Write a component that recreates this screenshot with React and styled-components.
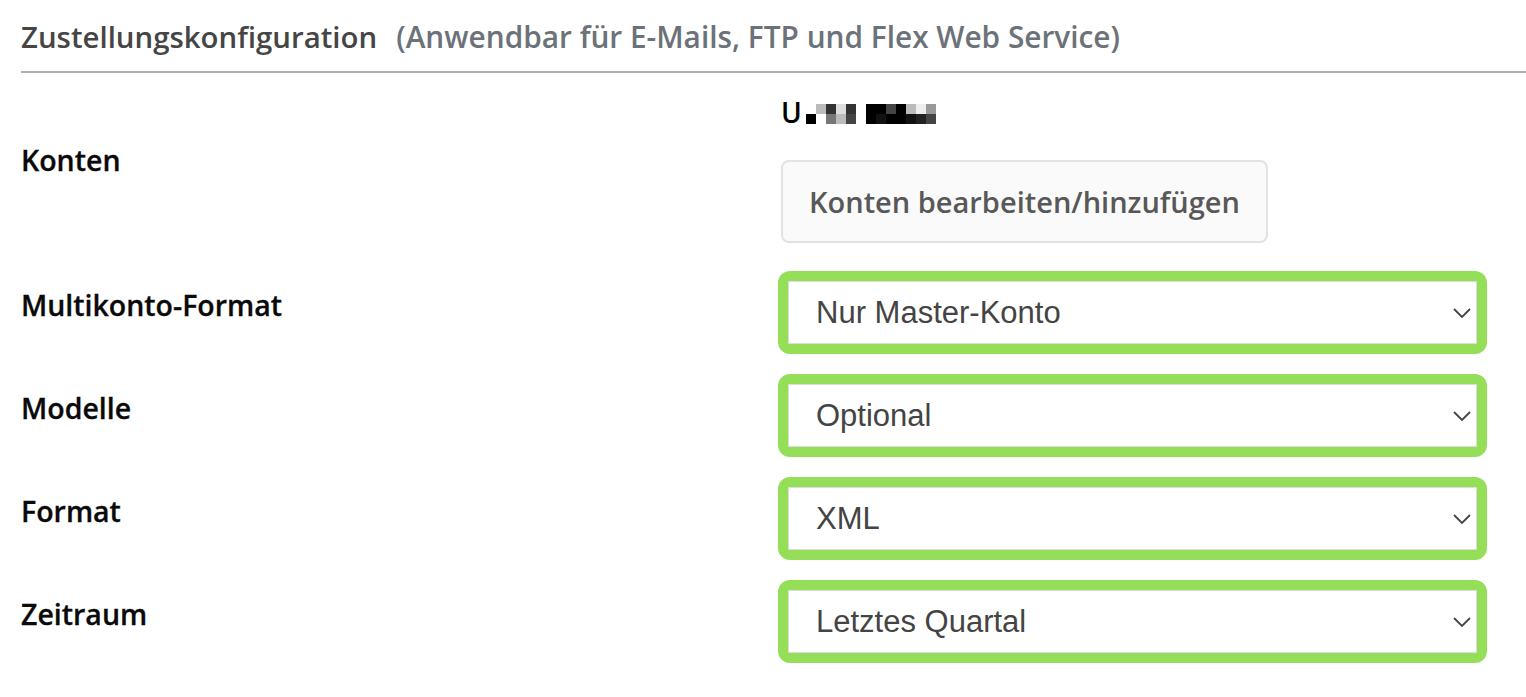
import React from "react";
import styled, { createGlobalStyle } from "styled-components";

const Global = createGlobalStyle`
  html, body { margin: 0; padding: 0; background: #fff; }
  body { font-family: "Open Sans", Lato, sans-serif; }
`;

const Page = styled.div`
  width: 1526px;
  height: 697px;
  overflow: hidden;
  padding: 18px 0 0 21px;
  box-sizing: border-box;
`;

const Header = styled.div`
  display: flex;
  align-items: baseline;
  gap: 19px;
  height: 37px;
  border-bottom: 2px solid #b1b1b1;
  padding-bottom: 16px;
  font-size: 29.4px;
  font-weight: 600;
  line-height: 37px;
  white-space: nowrap;
`;

const Title = styled.span`
  color: #454545;
`;

const Subtitle = styled.span`
  color: #6c7279;
  font-size: 29.8px;
`;

const Form = styled.div`
  display: grid;
  grid-template-columns: 757px 709px;
  margin-top: 24px;
`;

const Label = styled.div`
  font-size: 28.5px;
  line-height: 38px;
  font-weight: 600;
  color: #0a0a0a;
  -webkit-text-stroke: 0.3px #0a0a0a;
  align-self: ${(p) => (p.$top ? "start" : "center")};
  margin-top: ${(p) => p.$mt || 0}px;
  padding-bottom: ${(p) => (p.$top ? 0 : 16)}px;
`;

const AccountCell = styled.div`
  display: flex;
  flex-direction: column;
  align-items: flex-start;
  padding-left: 3px;
  padding-bottom: 18px;
`;

const AccountName = styled.div`
  display: flex;
  align-items: center;
  height: 30px;
  font-size: 28px;
  font-weight: 600;
  color: #000;
`;

const Mosaic = styled.div`
  display: grid;
  grid-template-columns: repeat(${(p) => p.$cols}, 10px);
  grid-template-rows: 10px 10px;
  margin-left: ${(p) => p.$ml}px;
  margin-top: 4px;
`;

const Cell = styled.span`
  background: ${(p) => p.$c};
`;

const EditButton = styled.button`
  margin-top: 33px;
  width: 487px;
  height: 83px;
  border: 2px solid #e2e2e2;
  border-radius: 8px;
  background: #fafafa;
  font-family: "Open Sans", Lato, sans-serif;
  font-size: 29px;
  font-weight: 600;
  color: #585858;
  padding: 0;
`;

const SelectCell = styled.div`
  padding: 10px 0;
`;

const Highlight = styled.div`
  height: 83px;
  box-sizing: border-box;
  border: 10px solid #94de58;
  border-radius: 12px;
`;

const SelectBox = styled.div`
  height: 100%;
  box-sizing: border-box;
  border: 1px solid #dcdcdc;
  border-radius: 3px;
  background: #fff;
  display: flex;
  align-items: center;
  justify-content: space-between;
  padding: 0 4px 0 27px;
  font-family: "Liberation Sans", Arial, sans-serif;
  font-size: 31px;
  color: #444;
`;

const Chevron = () => (
  <svg width="20" height="12" viewBox="0 0 20 12">
    <path d="M2 2 L10 10 L18 2" fill="none" stroke="#444" strokeWidth="1.8" />
  </svg>
);

const Select = ({ value }) => (
  <SelectCell>
    <Highlight>
      <SelectBox>
        <span>{value}</span>
        <Chevron />
      </SelectBox>
    </Highlight>
  </SelectCell>
);

const g1 = ["#fff", "#bbb", "#333", "#ddd", "#333", "#000", "#fff", "#777", "#bbb", "#444"];
const g2 = [
  "#000", "#000", "#444", "#000", "#bbb", "#eee", "#999",
  "#000", "#111", "#000", "#000", "#111", "#222", "#444",
];

const rows = [
  ["Multikonto-Format", "Nur Master-Konto"],
  ["Modelle", "Optional"],
  ["Format", "XML"],
  ["Zeitraum", "Letztes Quartal"],
];

export default function App() {
  return (
    <>
      <Global />
      <Page>
        <Header>
          <Title>Zustellungskonfiguration</Title>
          <Subtitle>(Anwendbar für E-Mails, FTP und Flex Web Service)</Subtitle>
        </Header>
        <Form>
          <Label $top $mt={44}>Konten</Label>
          <AccountCell>
            <AccountName>
              U
              <Mosaic $cols={5} $ml={4}>
                {g1.map((c, i) => <Cell key={i} $c={c} />)}
              </Mosaic>
              <Mosaic $cols={7} $ml={10}>
                {g2.map((c, i) => <Cell key={i} $c={c} />)}
              </Mosaic>
            </AccountName>
            <EditButton>Konten bearbeiten/hinzufügen</EditButton>
          </AccountCell>
          {rows.map(([l, v]) => (
            <React.Fragment key={l}>
              <Label>{l}</Label>
              <Select value={v} />
            </React.Fragment>
          ))}
        </Form>
      </Page>
    </>
  );
}
